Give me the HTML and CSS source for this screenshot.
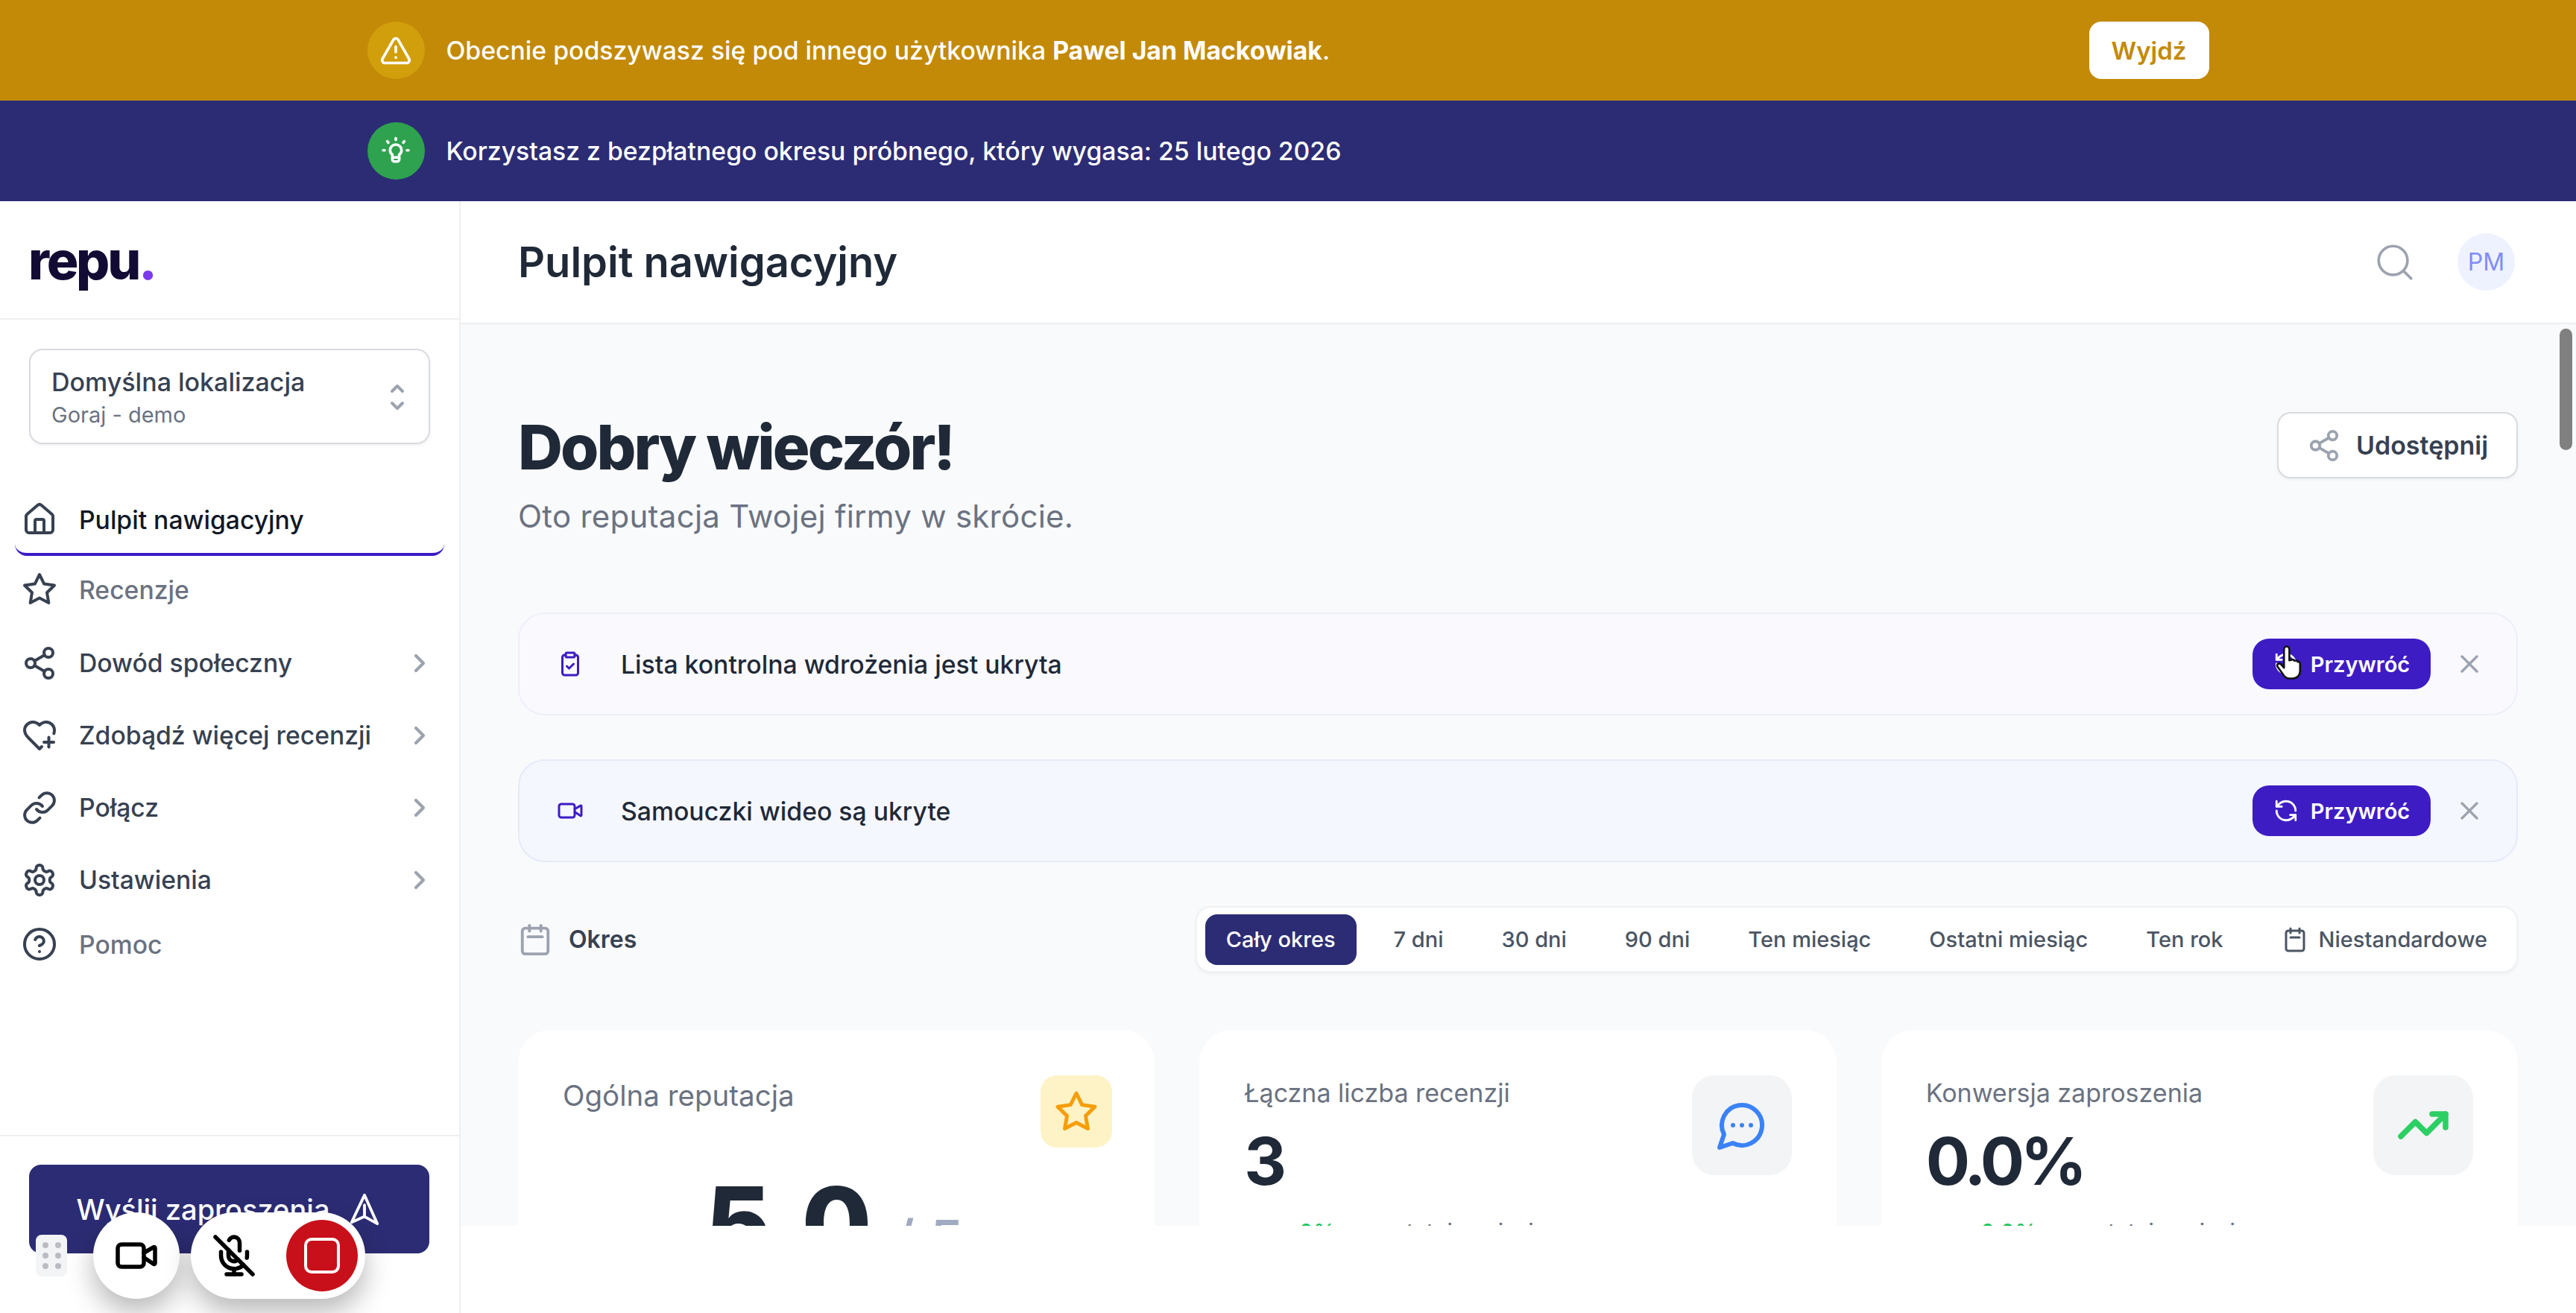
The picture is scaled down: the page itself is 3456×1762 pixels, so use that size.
FILE: index.html
```html
<!DOCTYPE html>
<html lang="pl">
<head>
    <meta charset="utf-8">
    <title>Pulpit nawigacyjny - repu</title>
    <link rel="stylesheet" href="styles.css">
</head>
<body>
    <div class="top-bar bar-amber">
        <div class="top-bar-inner">
            <span class="top-icon top-icon-amber">
                <svg viewBox="0 0 24 24" class="ic ic-44"><path d="m21.73 18-8-14a2 2 0 0 0-3.48 0l-8 14A2 2 0 0 0 4 21h16a2 2 0 0 0 1.73-3"/><path d="M12 9v4"/><path d="M12 17h.01"/></svg>
            </span>
            <span class="top-text">Obecnie podszywasz się pod innego użytkownika <b>Pawel Jan Mackowiak</b>.</span>
            <button class="exit-btn">Wyjdź</button>
        </div>
    </div>
    <div class="top-bar bar-navy">
        <div class="top-bar-inner">
            <span class="top-icon top-icon-green">
                <svg viewBox="0 0 24 24" class="ic ic-44"><path d="M9.5 14.5c-1-.8-1.7-1.9-1.7-3.2a4.2 4.2 0 0 1 8.4 0c0 1.300-.7 2.400-1.700 3.200v3.500a1.500 1.500 0 0 1-1.500 1.500h-2a1.500 1.500 0 0 1-1.500-1.500z"/><path d="M9.700 16.500h4.600"/><path d="M12 2.500v1"/><path d="m5.800 4.800.7.8"/><path d="m18.200 4.800-.7.8"/><path d="M2.800 11.300h1"/><path d="M20.200 11.300h1"/></svg>
            </span>
            <span class="top-text">Korzystasz z bezpłatnego okresu próbnego, który wygasa: 25 lutego 2026</span>
        </div>
    </div>

    <div class="app">
        <aside class="sidebar">
            <div class="logo-row">
                <span class="logo">repu<span class="logo-dot">.</span></span>
            </div>
            <div class="location">
                <div>
                    <div class="location-name">Domyślna lokalizacja</div>
                    <div class="location-sub">Goraj - demo</div>
                </div>
                <svg viewBox="0 0 24 48" class="location-arrows"><path d="m5 16 7-7 7 7"/><path d="m5 32 7 7 7-7"/></svg>
            </div>
            <nav class="nav">
                <a class="nav-link active">
                    <svg viewBox="0 0 24 24" class="ic nav-icon"><path d="M15 21v-8a1 1 0 0 0-1-1h-4a1 1 0 0 0-1 1v8"/><path d="M3 10a2 2 0 0 1 .709-1.528l7-5.999a2 2 0 0 1 2.582 0l7 5.999A2 2 0 0 1 21 10v9a2 2 0 0 1-2 2H5a2 2 0 0 1-2-2z"/></svg>
                    Pulpit nawigacyjny
                </a>
                <a class="nav-link nav-muted nav-reviews">
                    <svg viewBox="0 0 24 24" class="ic nav-icon"><path d="M12 2l3.090 6.260L22 9.270l-5 4.870 1.180 6.880L12 17.770l-6.180 3.250L7 14.140 2 9.270l6.910-1.010z"/></svg>
                    Recenzje
                </a>
                <a class="nav-link">
                    <svg viewBox="0 0 24 24" class="ic nav-icon"><circle cx="18" cy="5" r="3"/><circle cx="6" cy="12" r="3"/><circle cx="18" cy="19" r="3"/><path d="m8.590 13.510 6.830 3.980"/><path d="m15.410 6.510-6.820 3.980"/></svg>
                    Dowód społeczny
                    <svg viewBox="0 0 24 24" class="ic nav-chevron"><path d="m9 18 6-6-6-6"/></svg>
                </a>
                <a class="nav-link">
                    <svg viewBox="0 0 24 24" class="ic nav-icon"><path d="M13.500 19.500 12 21l-7-7c-1.500-1.450-3-3.200-3-5.500A5.500 5.500 0 0 1 7.500 3c1.760 0 3 .5 4.500 2 1.500-1.500 2.740-2 4.500-2A5.500 5.500 0 0 1 22 8.500c0 .78-.13 1.500-.35 2.200"/><path d="M15 16.500h6.500"/><path d="M18.250 13.250v6.500"/></svg>
                    Zdobądź więcej recenzji
                    <svg viewBox="0 0 24 24" class="ic nav-chevron"><path d="m9 18 6-6-6-6"/></svg>
                </a>
                <a class="nav-link">
                    <svg viewBox="0 0 24 24" class="ic nav-icon"><path d="M10 13a5 5 0 0 0 7.540.54l3-3a5 5 0 0 0-7.070-7.070l-1.720 1.710"/><path d="M14 11a5 5 0 0 0-7.540-.54l-3 3a5 5 0 0 0 7.070 7.070l1.710-1.710"/></svg>
                    Połącz
                    <svg viewBox="0 0 24 24" class="ic nav-chevron"><path d="m9 18 6-6-6-6"/></svg>
                </a>
                <a class="nav-link">
                    <svg viewBox="0 0 24 24" class="ic nav-icon"><path d="M12.220 2h-.44a2 2 0 0 0-2 2v.18a2 2 0 0 1-1 1.730l-.43.25a2 2 0 0 1-2 0l-.15-.08a2 2 0 0 0-2.730.73l-.22.38a2 2 0 0 0 .73 2.730l.15.1a2 2 0 0 1 1 1.720v.51a2 2 0 0 1-1 1.740l-.15.09a2 2 0 0 0-.73 2.730l.22.38a2 2 0 0 0 2.730.73l.15-.08a2 2 0 0 1 2 0l.43.25a2 2 0 0 1 1 1.730V20a2 2 0 0 0 2 2h.44a2 2 0 0 0 2-2v-.18a2 2 0 0 1 1-1.730l.43-.25a2 2 0 0 1 2 0l.15.08a2 2 0 0 0 2.730-.73l.22-.39a2 2 0 0 0-.73-2.730l-.15-.08a2 2 0 0 1-1-1.740v-.5a2 2 0 0 1 1-1.740l.15-.09a2 2 0 0 0 .73-2.730l-.22-.38a2 2 0 0 0-2.730-.73l-.15.08a2 2 0 0 1-2 0l-.43-.25a2 2 0 0 1-1-1.730V4a2 2 0 0 0-2-2z"/><circle cx="12" cy="12" r="3"/></svg>
                    Ustawienia
                    <svg viewBox="0 0 24 24" class="ic nav-chevron"><path d="m9 18 6-6-6-6"/></svg>
                </a>
                <a class="nav-link nav-muted nav-help">
                    <svg viewBox="0 0 24 24" class="ic nav-icon"><circle cx="12" cy="12" r="10"/><path d="M9.090 9a3 3 0 0 1 5.830 1c0 2-3 3-3 3"/><path d="M12 17h.01"/></svg>
                    Pomoc
                </a>
            </nav>
            <div class="sidebar-foot">
                <button class="invite-btn">
                    Wyślij zaproszenia
                    <svg viewBox="0 0 24 24" class="ic invite-icon"><path d="M12 2 3 21l9-4 9 5z"/><path d="M12 17V9"/></svg>
                </button>
            </div>
        </aside>

        <main class="main">
            <header class="main-head">
                <h2 class="page-title">Pulpit nawigacyjny</h2>
                <div class="head-right">
                    <svg viewBox="0 0 24 24" class="ic search-icon"><circle cx="11" cy="11" r="8"/><path d="m21 21-4.300-4.300"/></svg>
                    <span class="avatar">PM</span>
                </div>
            </header>

            <div class="content">
                <div class="scroll-thumb"></div>

                <section class="hero">
                    <div>
                        <h1 class="hero-title">Dobry wieczór!</h1>
                        <p class="hero-sub">Oto reputacja Twojej firmy w skrócie.</p>
                    </div>
                    <button class="share-btn">
                        <svg viewBox="0 0 24 24" class="ic share-icon"><circle cx="18" cy="5" r="3"/><circle cx="6" cy="12" r="3"/><circle cx="18" cy="19" r="3"/><path d="m8.590 13.510 6.830 3.980"/><path d="m15.410 6.510-6.820 3.980"/></svg>
                        Udostępnij
                    </button>
                </section>

                <section class="notice notice-list">
                    <svg viewBox="0 0 24 24" class="ic notice-icon"><rect x="8" y="2" width="8" height="4" rx="1"/><path d="M16 4h1a2 2 0 0 1 2 2v14a2 2 0 0 1-2 2H7a2 2 0 0 1-2-2V6a2 2 0 0 1 2-2h1"/><path d="m9 14 2 2 4-4"/></svg>
                    <span class="notice-text">Lista kontrolna wdrożenia jest ukryta</span>
                    <button class="restore-btn">
                        <svg viewBox="0 0 24 24" class="ic restore-icon"><path d="M21 12a9 9 0 0 0-9-9 9.750 9.750 0 0 0-6.740 2.740L3 8"/><path d="M3 3v5h5"/><path d="M3 12a9 9 0 0 0 9 9 9.750 9.750 0 0 0 6.740-2.740L21 16"/><path d="M16 16h5v5"/></svg>
                        Przywróć
                        <svg viewBox="0 0 24 32" class="hand-cursor"><path d="M8 4c0-4 5-4 5 0v10l2-.5c1.500-.5 2.500.2 2.800 1 1.200-.6 2.700-.2 3 .9 1.100-.3 2.200.4 2.200 1.600V24c0 4-3 7-7 7h-3c-3 0-4.500-1.500-6-4l-5-7c-1.200-2 1-4 3-2.500L8 21z"/></svg>
                    </button>
                    <svg viewBox="0 0 24 24" class="ic close-icon"><path d="M18 6 6 18"/><path d="m6 6 12 12"/></svg>
                </section>

                <section class="notice notice-video">
                    <svg viewBox="0 0 24 24" class="ic notice-icon"><path d="m16 13 5.223 3.482a.5.5 0 0 0 .777-.416V7.870a.5.5 0 0 0-.752-.432L16 10.500"/><rect x="2" y="6" width="14" height="12" rx="2"/></svg>
                    <span class="notice-text">Samouczki wideo są ukryte</span>
                    <button class="restore-btn">
                        <svg viewBox="0 0 24 24" class="ic restore-icon"><path d="M21 12a9 9 0 0 0-9-9 9.750 9.750 0 0 0-6.740 2.740L3 8"/><path d="M3 3v5h5"/><path d="M3 12a9 9 0 0 0 9 9 9.750 9.750 0 0 0 6.740-2.740L21 16"/><path d="M16 16h5v5"/></svg>
                        Przywróć
                    </button>
                    <svg viewBox="0 0 24 24" class="ic close-icon"><path d="M18 6 6 18"/><path d="m6 6 12 12"/></svg>
                </section>

                <section class="period">
                    <div class="period-label">
                        <svg viewBox="0 0 24 24" class="ic period-icon"><path d="M8 2v4"/><path d="M16 2v4"/><rect x="3" y="4" width="18" height="18" rx="2"/><path d="M7 10h10"/></svg>
                        Okres
                    </div>
                    <div class="tabs">
                        <button class="tab active">Cały okres</button>
                        <button class="tab">7 dni</button>
                        <button class="tab">30 dni</button>
                        <button class="tab">90 dni</button>
                        <button class="tab">Ten miesiąc</button>
                        <button class="tab">Ostatni miesiąc</button>
                        <button class="tab">Ten rok</button>
                        <button class="tab tab-custom">
                            <svg viewBox="0 0 24 24" class="ic tab-icon"><path d="M8 2v4"/><path d="M16 2v4"/><rect x="4" y="4" width="16" height="18" rx="2"/><path d="M8 10h8"/></svg>
                            Niestandardowe
                        </button>
                    </div>
                </section>

                <section class="cards">
                    <div class="card">
                        <div class="card-head">
                            <span class="card-label card-label-big">Ogólna reputacja</span>
                            <span class="card-badge badge-star">
                                <svg viewBox="0 0 24 24" class="ic badge-star-icon"><path d="M12 2l3.090 6.260L22 9.270l-5 4.870 1.180 6.880L12 17.770l-6.180 3.250L7 14.140 2 9.270l6.910-1.010z"/></svg>
                            </span>
                        </div>
                        <div class="score"><span class="score-value">5.0</span><span class="score-max">/ 5</span></div>
                    </div>
                    <div class="card">
                        <div class="card-head">
                            <div>
                                <div class="card-label">Łączna liczba recenzji</div>
                                <div class="card-value">3</div>
                            </div>
                            <span class="card-badge badge-gray">
                                <svg viewBox="0 0 24 24" class="ic badge-chat"><path d="M7.900 20A9 9 0 1 0 4 16.100L2 22Z"/><path d="M8 12h.01"/><path d="M12 12h.01"/><path d="M16 12h.01"/></svg>
                            </span>
                        </div>
                        <div class="card-trend"><span class="trend-arrow">↗</span><b>+0%</b> w ostatnim miesiącu</div>
                    </div>
                    <div class="card">
                        <div class="card-head">
                            <div>
                                <div class="card-label">Konwersja zaproszenia</div>
                                <div class="card-value">0.0%</div>
                            </div>
                            <span class="card-badge badge-gray">
                                <svg viewBox="0 0 24 24" class="ic badge-trend"><path d="M22 7 13.500 15.500 8.500 10.500 2 17"/><path d="M16 7h6v6"/></svg>
                            </span>
                        </div>
                        <div class="card-trend"><span class="trend-arrow">↗</span><b>+0.0%</b> w ostatnim miesiącu</div>
                    </div>
                </section>
            </div>
            <div class="main-foot"></div>
        </main>
    </div>

    <div class="recorder">
        <div class="rec-handle">
            <i></i><i></i><i></i><i></i><i></i><i></i>
        </div>
        <div class="rec-cam">
            <svg viewBox="0 0 24 24" class="ic rec-icon"><path d="m16 13 5.223 3.482a.5.5 0 0 0 .777-.416V7.870a.5.5 0 0 0-.752-.432L16 10.500"/><rect x="2" y="6" width="14" height="12" rx="2"/></svg>
        </div>
        <div class="rec-pill">
            <svg viewBox="0 0 24 24" class="ic rec-icon rec-mic"><path d="M2 2l20 20"/><path d="M18.890 13.230A7.120 7.120 0 0 0 19 12v-2"/><path d="M5 10v2a7 7 0 0 0 12 5"/><path d="M15 9.340V5a3 3 0 0 0-5.680-1.330"/><path d="M9 9v3a3 3 0 0 0 5.120 2.120"/><path d="M12 19v3"/><path d="M8 22h8"/></svg>
            <span class="rec-stop"><span class="rec-stop-inner"></span></span>
        </div>
    </div>
</body>
</html>
```

FILE: styles.css
```css
* {
    box-sizing: border-box;
}

html, body {
    margin: 0;
    height: 100%;
    overflow: hidden;
}

body {
    display: flex;
    flex-direction: column;
    font-family: Inter, "Noto Sans", sans-serif;
    color: #1f2937;
    background: white;
}

button {
    font-family: inherit;
    cursor: pointer;
    border: none;
}

.ic {
    fill: none;
    stroke: currentColor;
    stroke-width: 2;
    stroke-linecap: round;
    stroke-linejoin: round;
    flex-shrink: 0;
}

.ic-44 {
    width: 44px;
    height: 44px;
}

/* top banners */
.top-bar {
    height: 135px;
    flex-shrink: 0;
    color: white;
}

.bar-amber {
    background: #c38a08;
}

.bar-navy {
    background: #2c2c74;
}

.top-bar-inner {
    width: 2471px;
    height: 100%;
    margin: 0 auto;
    display: flex;
    align-items: center;
    gap: 29px;
}

.top-icon {
    width: 77px;
    height: 77px;
    border-radius: 50%;
    display: flex;
    align-items: center;
    justify-content: center;
}

.top-icon-amber {
    background: #d19f0c;
}

.top-icon-green {
    background: #2fa24f;
}

.top-text {
    font-size: 33.75px;
    font-weight: 500;
    flex: 1;
}

.top-text b {
    font-weight: 700;
}

.exit-btn {
    width: 161px;
    height: 77px;
    border-radius: 16px;
    background: white;
    color: #c38a08;
    font-size: 33px;
    font-weight: 600;
}

/* shell */
.app {
    flex: 1;
    display: flex;
    min-height: 0;
}

.sidebar {
    width: 618px;
    flex-shrink: 0;
    display: flex;
    flex-direction: column;
    border-right: 2px solid #eeeff1;
    background: white;
}

.logo-row {
    height: 159px;
    padding-left: 38px;
    display: flex;
    align-items: center;
    border-bottom: 2px solid #eeeff1;
}

.logo {
    font-size: 71px;
    font-weight: 800;
    letter-spacing: -0.045em;
    color: #120c35;
}

.logo-dot {
    color: #7c3aed;
}

.location {
    width: 538px;
    height: 128px;
    margin: 39px 0 0 39px;
    padding: 2px 30px 0 28px;
    display: flex;
    align-items: center;
    justify-content: space-between;
    border: 2px solid #d8dbe0;
    border-radius: 18px;
    box-shadow: 0 2px 4px rgba(0, 0, 0, 0.06);
}

.location-name {
    font-size: 34px;
    font-weight: 500;
    color: #374151;
}

.location-sub {
    margin-top: 6px;
    font-size: 29px;
    color: #6b7280;
}

.location-arrows {
    width: 24px;
    height: 48px;
    fill: none;
    stroke: #9ca3af;
    stroke-width: 4;
    stroke-linecap: round;
    stroke-linejoin: round;
}

.nav {
    flex: 1;
    margin: 52px 20px 0;
    display: flex;
    flex-direction: column;
}

.nav-link {
    height: 97px;
    padding: 0 13px 0 9px;
    display: flex;
    align-items: center;
    gap: 29px;
    font-size: 33.7px;
    font-weight: 500;
    color: #374151;
}

.nav-link.active {
    height: 98px;
    padding-top: 4px;
    color: #111827;
    border-bottom: 4px solid #3d1cc4;
    border-radius: 0 0 16px 16px;
}

.nav-muted {
    color: #6b7280;
}

.nav-reviews {
    height: 90px;
    margin-bottom: 5px;
}

.nav-help {
    height: 76px;
}

.nav-icon {
    width: 48px;
    height: 48px;
    color: #374151;
}

.nav-chevron {
    width: 40px;
    height: 40px;
    margin-left: auto;
    color: #9ca3af;
    stroke-width: 2.5;
}

.sidebar-foot {
    height: 239px;
    padding: 38px 40px 0 39px;
    border-top: 2px solid #eeeff1;
}

.invite-btn {
    width: 100%;
    height: 119px;
    display: flex;
    align-items: center;
    justify-content: center;
    gap: 24px;
    border-radius: 16px;
    background: #2c2c74;
    color: white;
    font-size: 38px;
    font-weight: 500;
}

.invite-icon {
    width: 46px;
    height: 46px;
}

/* main column */
.main {
    flex: 1;
    min-width: 0;
    display: flex;
    flex-direction: column;
}

.main-head {
    height: 165px;
    flex-shrink: 0;
    padding: 0 82px 0 77px;
    display: flex;
    align-items: center;
    justify-content: space-between;
    border-bottom: 2px solid #eeeff1;
}

.page-title {
    margin: 0;
    font-size: 56px;
    font-weight: 600;
    color: #1f2937;
}

.head-right {
    display: flex;
    align-items: center;
    gap: 55px;
}

.search-icon {
    width: 58px;
    height: 58px;
    color: #9ca3af;
    stroke-width: 1.5;
}

.avatar {
    width: 77px;
    height: 77px;
    border-radius: 50%;
    background: #eef2ff;
    color: #818cf8;
    font-size: 32px;
    display: flex;
    align-items: center;
    justify-content: center;
}

.content {
    position: relative;
    flex: 1;
    min-height: 0;
    overflow: hidden;
    padding: 118px 78px 0 77px;
    background: #f9fafc;
}

.main-foot {
    height: 117px;
    flex-shrink: 0;
    background: white;
}

.scroll-thumb {
    position: absolute;
    top: 6px;
    right: 5px;
    width: 17px;
    height: 163px;
    border-radius: 9px;
    background: #808080;
}

.hero {
    display: flex;
    justify-content: space-between;
    align-items: flex-start;
    margin-bottom: 99px;
}

.hero-title {
    margin: 0;
    font-size: 83px;
    line-height: 94px;
    font-weight: 800;
    letter-spacing: -0.035em;
    color: #1f2937;
}

.hero-sub {
    margin: 16px 0 0;
    font-size: 42px;
    line-height: 60px;
    letter-spacing: 0.006em;
    color: #6b7280;
}

.share-btn {
    width: 323px;
    height: 89px;
    display: flex;
    align-items: center;
    justify-content: center;
    gap: 20px;
    border: 2px solid #d8dbe0;
    border-radius: 18px;
    background: white;
    color: #374151;
    font-size: 34px;
    font-weight: 600;
    box-shadow: 0 2px 4px rgba(0, 0, 0, 0.05);
}

.share-icon {
    width: 46px;
    height: 46px;
    color: #9ca3af;
}

.notice {
    height: 138px;
    margin-bottom: 59px;
    padding: 0 43px 0 50px;
    display: flex;
    align-items: center;
    gap: 50px;
    border: 2px solid #eeeefa;
    border-radius: 36px;
}

.notice-list {
    background: #faf9fe;
}

.notice-video {
    background: #f5f7fe;
    border-color: #e6eaf8;
}

.notice-icon {
    width: 36px;
    height: 36px;
    color: #3d1cc4;
}

.notice-text {
    flex: 1;
    font-size: 33.75px;
    font-weight: 500;
    color: #1f2937;
}

.restore-btn {
    position: relative;
    width: 239px;
    height: 68px;
    margin-right: -18px;
    display: flex;
    align-items: center;
    justify-content: center;
    gap: 16px;
    border-radius: 22px;
    background: #3d1cc4;
    color: white;
    font-size: 29px;
    font-weight: 600;
}

.restore-icon {
    width: 34px;
    height: 34px;
}

.hand-cursor {
    position: absolute;
    left: 30px;
    top: 9px;
    width: 36px;
    height: 46px;
    fill: white;
    stroke: #111;
    stroke-width: 1.8;
    stroke-linejoin: round;
}

.close-icon {
    width: 40px;
    height: 40px;
    color: #9ca3af;
}

.period {
    display: flex;
    align-items: center;
    justify-content: space-between;
    margin-bottom: 77px;
}

.period-label {
    display: flex;
    align-items: center;
    gap: 22px;
    font-size: 32px;
    font-weight: 600;
    color: #374151;
}

.period-icon {
    width: 46px;
    height: 46px;
    color: #9ca3af;
}

.tabs {
    height: 89px;
    padding: 0 11px;
    display: flex;
    align-items: center;
    gap: 22px;
    border: 2px solid #f0f1f3;
    border-radius: 20px;
    background: white;
    box-shadow: 0 2px 4px rgba(0, 0, 0, 0.05);
}

.tab {
    height: 68px;
    padding: 0 28px;
    display: flex;
    align-items: center;
    gap: 14px;
    border-radius: 16px;
    background: transparent;
    color: #4b5563;
    font-size: 29px;
    font-weight: 500;
}

.tab.active {
    background: #2c2c74;
    color: white;
}

.tab-icon {
    width: 36px;
    height: 36px;
}

.cards {
    display: grid;
    grid-template-columns: repeat(3, 1fr);
    gap: 60px;
}

.card {
    height: 500px;
    padding: 61px 60px;
    border-radius: 44px;
    background: white;
}

.card-head {
    display: flex;
    justify-content: space-between;
    align-items: flex-start;
}

.card-label {
    margin-top: 4px;
    font-size: 34px;
    line-height: 40px;
    color: #6b7280;
}

.card-label-big {
    margin-top: 6px;
    font-size: 38.5px;
    line-height: 42px;
}

.card-value {
    margin-top: 27px;
    font-size: 88px;
    line-height: 1;
    font-weight: 700;
    letter-spacing: -0.06em;
    color: #1f2937;
}

.card-badge {
    display: flex;
    align-items: center;
    justify-content: center;
}

.badge-star {
    width: 96px;
    height: 97px;
    margin-right: -3px;
    border-radius: 22px;
    background: #fef3c7;
    color: #f59e0b;
}

.badge-gray {
    width: 134px;
    height: 134px;
    border-radius: 30px;
    background: #f3f4f6;
}

.badge-star-icon {
    width: 60px;
    height: 60px;
    stroke-width: 2;
}

.badge-chat {
    width: 72px;
    height: 72px;
    color: #3b82f6;
}

.badge-trend {
    width: 72px;
    height: 72px;
    color: #2ccf63;
    stroke-width: 2.5;
}

.score {
    margin-top: 34px;
    padding-right: 6px;
    display: flex;
    align-items: baseline;
    justify-content: center;
    gap: 30px;
}

.score-value {
    font-size: 136px;
    line-height: 1;
    font-weight: 800;
    color: #1f2937;
}

.score-max {
    font-size: 74px;
    font-weight: 500;
    color: #a0aac0;
}

.card-trend {
    margin-top: 31px;
    font-size: 30px;
    line-height: 40px;
    color: #6b7280;
}

.trend-arrow {
    margin-right: 30px;
    color: #22c55e;
}

.card-trend b {
    color: #22c55e;
    font-weight: 500;
    margin-right: 20px;
}

/* floating recording widget */
.recorder {
    position: absolute;
    left: 48px;
    top: 1627px;
    display: flex;
    align-items: center;
}

.rec-handle {
    width: 42px;
    height: 56px;
    margin-right: 35px;
    padding: 10px 7px;
    display: grid;
    grid-template-columns: 1fr 1fr;
    gap: 6px 6px;
    place-items: center;
    border-radius: 8px;
    background: #f3f4f6;
}

.rec-handle i {
    width: 8px;
    height: 8px;
    border-radius: 50%;
    background: #b9bdc2;
}

.rec-cam,
.rec-pill {
    height: 116px;
    display: flex;
    align-items: center;
    background: white;
    box-shadow: 0 18px 36px rgba(0, 0, 0, 0.28);
}

.rec-cam {
    width: 116px;
    margin-right: 15px;
    justify-content: center;
    border-radius: 50%;
}

.rec-pill {
    width: 234px;
    padding: 0 10px 0 28px;
    justify-content: space-between;
    border-radius: 58px;
}

.rec-icon {
    width: 60px;
    height: 60px;
    color: black;
    stroke-width: 2.2;
}

.rec-stop {
    width: 96px;
    height: 96px;
    display: flex;
    align-items: center;
    justify-content: center;
    border-radius: 50%;
    background: #c8101a;
}

.rec-stop-inner {
    width: 48px;
    height: 48px;
    border: 4px solid white;
    border-radius: 10px;
}
```
